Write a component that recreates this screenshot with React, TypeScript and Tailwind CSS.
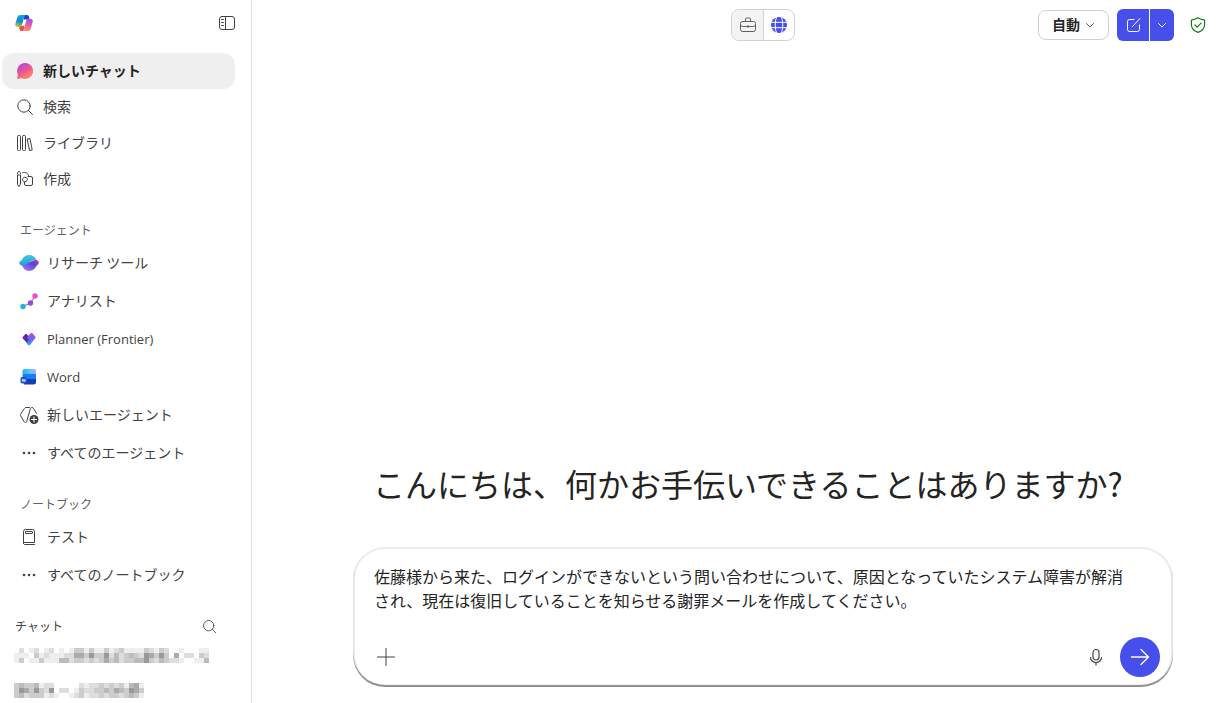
import React from "react";

type IconProps = { className?: string };

const line = {
  fill: "none",
  stroke: "currentColor",
  strokeLinecap: "round" as const,
  strokeLinejoin: "round" as const,
};

function CopilotLogo() {
  return (
    <svg viewBox="0 0 18 18" className="size-[18px]" aria-hidden="true">
      <defs>
        <linearGradient id="logo-left" x1="0.3" y1="0" x2="0" y2="1">
          <stop offset="0" stopColor="#0aa5e8" />
          <stop offset="0.45" stopColor="#1586cf" />
          <stop offset="0.75" stopColor="#6bbf6a" />
          <stop offset="1" stopColor="#f2c81c" />
        </linearGradient>
        <linearGradient id="logo-right" x1="0.6" y1="0" x2="0.3" y2="1">
          <stop offset="0" stopColor="#a050e8" />
          <stop offset="0.5" stopColor="#ee5c9c" />
          <stop offset="1" stopColor="#fb9a6a" />
        </linearGradient>
      </defs>
      <path d="M8.500 1H12c1 0 1.600.6 1.900 1.600L14.700 5.500H9z" fill="#1746c4" />
      <path d="M9.500 17H6.500c-1 0-1.500-.7-1.800-1.600L3.800 12.500 9 11.500z" fill="#f0503c" />
      <path d="M5.500 1H11c-1 .3-1.500 1.300-1.900 2.600L7 10.800c-.5 1.600-1.200 2.200-2.700 2.200H2.500C.6 13-.1 11.600.4 9.700L2.300 3.600C2.900 1.800 3.800 1 5.500 1z" fill="url(#logo-left)" />
      <path d="M12.500 17H7c1-.3 1.500-1.300 1.900-2.600L11 7.200C11.500 5.600 12.200 5 13.700 5h1.800c1.900 0 2.600 1.400 2.100 3.300l-1.900 6.100c-.6 1.800-1.500 2.600-3.200 2.600z" fill="url(#logo-right)" />
    </svg>
  );
}

function PanelIcon() {
  return (
    <svg viewBox="0 0 16 16" className="size-4" {...line} aria-hidden="true">
      <rect x="0.5" y="1.5" width="15" height="13" rx="2.5" />
      <path d="M6.500 1.500v13M2.500 4.500h2M2.500 7.500h2M2.500 10.500h2" />
    </svg>
  );
}

function ChatIcon() {
  return (
    <svg viewBox="0 0 18 18" className="size-[18px]" aria-hidden="true">
      <defs>
        <linearGradient id="chat-fill" x1="0.2" y1="0" x2="0.8" y2="1">
          <stop offset="0" stopColor="#a84be0" />
          <stop offset="0.5" stopColor="#ee5590" />
          <stop offset="1" stopColor="#fd9a5c" />
        </linearGradient>
      </defs>
      <path d="M9 1a8 8 0 1 1-3.800 15L1.600 17a.5.5 0 0 1-.6-.6l1-3.600A8 8 0 0 1 9 1z" fill="url(#chat-fill)" />
    </svg>
  );
}

function SearchIcon({ className = "size-[18px]" }: IconProps) {
  return (
    <svg viewBox="0 0 18 18" className={className} {...line} aria-hidden="true">
      <circle cx="8" cy="8" r="6.2" />
      <path d="m12.500 12.500 4 4" />
    </svg>
  );
}

function LibraryIcon() {
  return (
    <svg viewBox="0 0 18 18" className="size-[18px]" {...line} aria-hidden="true">
      <rect x="1.500" y="1.500" width="3" height="15" rx="1" />
      <rect x="6.500" y="1.500" width="3" height="15" rx="1" />
      <rect x="12.300" y="4.600" width="2.800" height="11.800" rx="1" transform="rotate(-12 13.700 10.500)" />
    </svg>
  );
}

function CreateIcon() {
  return (
    <svg viewBox="0 0 18 18" className="size-[18px]" {...line} aria-hidden="true">
      <path d="M1.500 3.500C1.500 2.400 2 1.500 3 1.500s1.500.9 1.500 2-.5 1.700-1.500 1.700-1.500-.6-1.500-1.700zM1.500 5.500v8.700L3 16.500l1.500-2.300V5.500" />
      <path d="M6.500 2.700c3.200-1.200 6 .6 6.300 3.800M10 11.500c-1.800 1-3.500 0-3.500-1.800 0-2 1.800-2.700 3.500-2.200 1.700.5 2 2.500 0 4" />
      <path d="M12 6.500h3a1.500 1.500 0 0 1 1.500 1.500v6a1.500 1.500 0 0 1-1.500 1.500h-5A1.500 1.500 0 0 1 8.500 14v-1.800" />
    </svg>
  );
}

function ResearchIcon() {
  return (
    <svg viewBox="0 0 20 20" className="size-5" aria-hidden="true">
      <defs>
        <linearGradient id="planet-top" x1="0" y1="0" x2="0.3" y2="1">
          <stop offset="0" stopColor="#3fd6d0" />
          <stop offset="1" stopColor="#2f94e8" />
        </linearGradient>
        <linearGradient id="planet-low" x1="1" y1="0" x2="0.2" y2="1">
          <stop offset="0" stopColor="#c23ad8" />
          <stop offset="0.4" stopColor="#5a45c8" />
          <stop offset="1" stopColor="#9a78ff" />
        </linearGradient>
      </defs>
      <path d="M3 12c1.200 3.800 3.700 6 7 6 3.600 0 6.300-2.200 7.200-5.200 1.700-.9 2.600-2.100 2.600-3.100 0-1.500-1.400-2.600-3.300-2.900z" fill="url(#planet-low)" />
      <path d="M2.800 7.200C4 4 6.500 2 10 2c3.500 0 6.200 2 7.200 5-3-.2-5.200.9-7.400 2.500C7.200 11.500 5 13 2.800 12.700 1.200 12.200.2 11.200.2 10.100c0-1.100 1-2.200 2.600-2.900z" fill="url(#planet-top)" />
    </svg>
  );
}

function AnalystIcon() {
  return (
    <svg viewBox="0 0 20 20" className="size-5" aria-hidden="true">
      <path d="M4 15.500 11.500 12 16 5" fill="none" stroke="#8a83a8" strokeWidth="1.200" />
      <circle cx="4" cy="15.500" r="2.700" fill="#1fb0dd" />
      <circle cx="11.500" cy="12" r="2.700" fill="#9a45dc" />
      <circle cx="16" cy="5" r="2.700" fill="#e850d4" />
    </svg>
  );
}

function PlannerIcon() {
  return (
    <svg viewBox="0 0 20 20" className="size-5" aria-hidden="true">
      <defs>
        <linearGradient id="planner-right" x1="0.6" y1="0" x2="0.4" y2="1">
          <stop offset="0" stopColor="#d23ccb" />
          <stop offset="0.4" stopColor="#7c5cf0" />
          <stop offset="1" stopColor="#27a4f0" />
        </linearGradient>
      </defs>
      <rect x="0.5" y="0.5" width="19" height="19" rx="4" fill="#fff" stroke="#f5f5f5" />
      <path d="M3.800 8 6 5.500c.6-.6 1.500-.6 2.100 0L11 8.500l1 5-2 2.800-6.200-6.800c-.5-.5-.5-1 0-1.500z" fill="#6324ac" />
      <path d="m8 8.500 3.600-4c.6-.6 1.400-.6 2 0L16.200 7.500c.5.6.5 1.200 0 1.800l-5.200 6.600c-.6.6-1.300.6-1.900 0L7.500 14 10 11z" fill="url(#planner-right)" />
    </svg>
  );
}

function WordIcon() {
  return (
    <svg viewBox="0 0 20 20" className="size-5" aria-hidden="true">
      <defs>
        <linearGradient id="word-page" x1="0" y1="0" x2="1" y2="0">
          <stop offset="0" stopColor="#20b4fa" />
          <stop offset="0.6" stopColor="#62c6ff" />
          <stop offset="1" stopColor="#a9a4ff" />
        </linearGradient>
      </defs>
      <path d="M5.500 2H15a2 2 0 0 1 2 2v4H3.500V4a2 2 0 0 1 2-2z" fill="url(#word-page)" />
      <path d="M5 7h12v5H3.500V8.500A1.500 1.500 0 0 1 5 7z" fill="#1b7cf2" />
      <path d="M5 12h12v3a2.500 2.500 0 0 1-2.500 2.500H5z" fill="#123fb8" />
      <rect x="1.500" y="10" width="6.500" height="6.500" rx="1.800" fill="#1b52c8" />
      <path d="m3.200 12 .7 2.600.9-2.200.9 2.200.7-2.600" fill="none" stroke="#fff" strokeWidth="0.8" />
    </svg>
  );
}

function NewAgentIcon() {
  return (
    <svg viewBox="0 0 20 20" className="size-5" aria-hidden="true">
      <path d="M10.500 2.500H6.800a1.500 1.500 0 0 0-1.300.8L1.500 9.400a1 1 0 0 0 0 1.200l3.700 6.200c.3.5.7.7 1.200.7.7 0 1.100-.4 1.300-1L11.300 4c.3-.9.8-1.500 1.700-1.500.7 0 1.200.3 1.500.9l3 5" {...line} />
      <circle cx="15" cy="14.500" r="4.500" fill="currentColor" />
      <path d="M15 12v5M12.500 14.500h5" stroke="#fff" strokeLinecap="round" />
    </svg>
  );
}

function DotsIcon() {
  return (
    <svg viewBox="0 0 20 20" className="size-5" fill="currentColor" aria-hidden="true">
      <circle cx="5" cy="10" r="1.300" />
      <circle cx="10" cy="10" r="1.300" />
      <circle cx="15" cy="10" r="1.300" />
    </svg>
  );
}

function NotebookIcon() {
  return (
    <svg viewBox="0 0 20 20" className="size-5" {...line} aria-hidden="true">
      <path d="M4.500 16V4.500a2 2 0 0 1 2-2h7a2 2 0 0 1 2 2v11h-11a1.500 1.500 0 0 0 1.500 2h9.500" />
      <rect x="6.500" y="4.500" width="7" height="2" rx="0.5" />
    </svg>
  );
}

function BriefcaseIcon() {
  return (
    <svg viewBox="0 0 18 18" className="size-[18px]" {...line} aria-hidden="true">
      <rect x="1.500" y="5.500" width="15" height="10" rx="2" />
      <path d="M6.500 5.500V3a1 1 0 0 1 1-1h3a1 1 0 0 1 1 1v2.500M1.500 8.500c0 1.200.8 2 2 2h11c1.200 0 2-.8 2-2M9 9.500v2" />
    </svg>
  );
}

function GlobeIcon() {
  return (
    <svg viewBox="0 0 18 18" className="size-[18px]" aria-hidden="true">
      <circle cx="9" cy="9" r="8" fill="#464feb" />
      <path d="M1 6.300h16M1 11.700h16M6.500 1C4.800 5.500 4.800 12.500 6.500 17M11.500 1c1.700 4.500 1.700 11.500 0 16" fill="none" stroke="#fff" />
    </svg>
  );
}

function ChevronIcon() {
  return (
    <svg viewBox="0 0 10 10" className="size-[10px]" {...line} aria-hidden="true">
      <path d="M1.500 3.500 5 7l3.500-3.500" />
    </svg>
  );
}

function ComposeIcon() {
  return (
    <svg viewBox="0 0 16 16" className="size-4" {...line} aria-hidden="true">
      <path d="M9 2.500H4.500a2 2 0 0 0-2 2v8a2 2 0 0 0 2 2h8a2 2 0 0 0 2-2V8M7.500 9.500l7.500-8" />
    </svg>
  );
}

function ShieldIcon() {
  return (
    <svg viewBox="0 0 16 16" className="size-4" {...line} strokeWidth="1.200" aria-hidden="true">
      <path d="M8 .7c1.700 1.200 3.600 2 6 2.200.4 0 .6.2.6.6v4c0 3.800-2.200 6.400-6.600 7.900-4.400-1.500-6.600-4.100-6.600-7.900v-4c0-.4.2-.6.6-.6C4.400 2.700 6.300 1.900 8 .7zM5 8l2.200 2.200L11 6.200" />
    </svg>
  );
}

function PlusIcon() {
  return (
    <svg viewBox="0 0 18 18" className="size-[18px]" {...line} aria-hidden="true">
      <path d="M9 .5v17M.5 9h17" />
    </svg>
  );
}

function MicIcon() {
  return (
    <svg viewBox="0 0 16 18" className="h-[18px] w-4" {...line} strokeWidth="1.200" aria-hidden="true">
      <rect x="5" y="1.500" width="6" height="10.500" rx="3" />
      <path d="M2.500 9.500a5.500 5 0 0 0 11 0M8 14.500v2.500" />
    </svg>
  );
}

function ArrowIcon() {
  return (
    <svg viewBox="0 0 20 20" className="size-5" {...line} strokeWidth="1.300" aria-hidden="true">
      <path d="M1.500 10h17M11 2.500l7.500 7.500-7.500 7.500" />
    </svg>
  );
}

// One hex digit per block, f = white
const hiddenChats = [
  {
    name: "chat-1",
    rows: [
      "fdfedfedfefecceceecedceeeecdecdffefffeef",
      "eeefcedeeeddaac9cc9dbdcbcd9ac9cfafddfcdf",
      "ecfeeceeebbdccdcdcacbdccbb9cdbcddeffeebf",
    ],
  },
  {
    name: "chat-2",
    rows: [
      "cbccbeddfffffdeddcdcdcebae",
      "c9ac9cd9fddfecddccbcabc9ac",
      "cbdcccedeffedceddcdccdcbce",
    ],
  },
];

function HiddenTitle({ rows }: { rows: string[] }) {
  const width = rows[0].length * 5;
  return (
    <svg viewBox={`0 0 ${width} 15`} className="h-[15px] self-start" shapeRendering="crispEdges" aria-hidden="true">
      {rows.map((row, y) =>
        row.split("").map((c, x) =>
          c === "f" ? null : <rect key={`${x}-${y}`} x={x * 5} y={y * 5} width="5" height="5" fill={`#${c}${c}${c}`} />
        )
      )}
    </svg>
  );
}

const navItems = [
  { label: "新しいチャット", icon: <ChatIcon />, active: true },
  { label: "検索", icon: <SearchIcon />, active: false },
  { label: "ライブラリ", icon: <LibraryIcon />, active: false },
  { label: "作成", icon: <CreateIcon />, active: false },
];

const sections = [
  {
    title: "エージェント",
    items: [
      { label: "リサーチ ツール", icon: <ResearchIcon /> },
      { label: "アナリスト", icon: <AnalystIcon /> },
      { label: "Planner (Frontier)", icon: <PlannerIcon />, latin: true },
      { label: "Word", icon: <WordIcon />, latin: true },
      { label: "新しいエージェント", icon: <NewAgentIcon /> },
      { label: "すべてのエージェント", icon: <DotsIcon /> },
    ],
  },
  {
    title: "ノートブック",
    items: [
      { label: "テスト", icon: <NotebookIcon /> },
      { label: "すべてのノートブック", icon: <DotsIcon /> },
    ],
  },
];

function Sidebar() {
  return (
    <aside className="flex w-[252px] shrink-0 flex-col overflow-hidden border-r border-[#e0e0e0] text-[#424242]">
      <div className="flex h-[46px] shrink-0 items-center justify-between pr-4 pl-[15px]">
        <a href="#" aria-label="Copilot">
          <CopilotLogo />
        </a>
        <button type="button" aria-label="サイドバー">
          <PanelIcon />
        </button>
      </div>
      <nav className="flex flex-col pt-[7px] pr-4 pb-px pl-[2px]">
        {navItems.map((item) => (
          <a
            key={item.label}
            href="#"
            className={
              item.active
                ? "flex h-9 items-center gap-[9px] rounded-xl bg-[#efefef] px-[14px] text-sm font-bold text-[#242424]"
                : "flex h-9 items-center gap-[9px] rounded-xl px-[14px] text-sm"
            }
          >
            {item.icon}
            <span className="pb-0.5">{item.label}</span>
          </a>
        ))}
      </nav>
      {sections.map((section) => (
        <section key={section.title} className="mt-[18px] pl-[19px]">
          <h2 className="pl-px text-xs leading-7 text-[#616161]">{section.title}</h2>
          <ul>
            {section.items.map((item) => (
              <li key={item.label}>
                <a href="#" className="flex h-[38px] items-center gap-2 text-sm">
                  {item.icon}
                  {item.latin ? (
                    <span className="font-['Open_Sans',sans-serif] text-[13px]">{item.label}</span>
                  ) : (
                    <span className="pb-0.5">{item.label}</span>
                  )}
                </a>
              </li>
            ))}
          </ul>
        </section>
      ))}
      <section className="mt-[18px] pr-[34px] pl-[14px]">
        <div className="flex items-center justify-between">
          <h2 className="pl-px text-xs leading-7">チャット</h2>
          <button type="button" aria-label="チャットを検索">
            <SearchIcon className="size-[15px]" />
          </button>
        </div>
        <div className="flex flex-col gap-5 pt-2">
          {hiddenChats.map((chat) => (
            <HiddenTitle key={chat.name} rows={chat.rows} />
          ))}
        </div>
      </section>
    </aside>
  );
}

function TopBar() {
  return (
    <header className="grid h-[50px] grid-cols-[1fr_auto_1fr] items-center px-[15px]">
      <div />
      <div className="flex h-8 overflow-hidden rounded-lg border border-[#d1d1d1]">
        <button type="button" aria-label="職場" className="flex w-8 items-center justify-center border-r border-[#d1d1d1] bg-[#f3f3f3] text-[#616161]">
          <BriefcaseIcon />
        </button>
        <button type="button" aria-label="Web" className="flex w-[30px] items-center justify-center">
          <GlobeIcon />
        </button>
      </div>
      <div className="flex items-center justify-end">
        <button type="button" className="mr-2 flex h-[30px] items-center gap-[5px] rounded-lg border border-[#d1d1d1] px-[13px] text-sm font-bold text-[#242424]">
          <span className="pb-0.5">自動</span>
          <span className="text-[#616161]">
            <ChevronIcon />
          </span>
        </button>
        <div className="mr-4 flex h-8 gap-px overflow-hidden rounded-md text-white">
          <button type="button" aria-label="新規作成" className="flex w-8 items-center justify-center bg-[#464feb]">
            <ComposeIcon />
          </button>
          <button type="button" aria-label="その他" className="flex w-6 items-center justify-center bg-[#464feb]">
            <ChevronIcon />
          </button>
        </div>
        <button type="button" aria-label="保護" className="text-[#107c10]">
          <ShieldIcon />
        </button>
      </div>
    </header>
  );
}

function Composer() {
  return (
    <form className="rounded-[32px] bg-white pt-[17px] pr-[13px] pb-[10px] pl-[21px] shadow-[inset_0_-2px_1px_#8c8c8c,inset_0_0_0_2px_#ebebeb]">
      <textarea
        aria-label="メッセージ"
        rows={3}
        className="mb-px block w-full resize-none overflow-hidden pr-7 text-base leading-6 text-[#242424] outline-none"
        defaultValue="佐藤様から来た、ログインができないという問い合わせについて、原因となっていたシステム障害が解消され、現在は復旧していることを知らせる謝罪メールを作成してください。"
      />
      <div className="flex items-center text-[#424242]">
        <button type="button" aria-label="追加" className="mr-auto ml-[3px]">
          <PlusIcon />
        </button>
        <button type="button" aria-label="音声入力" className="mr-4">
          <MicIcon />
        </button>
        <button type="submit" aria-label="送信" className="flex size-10 items-center justify-center rounded-full bg-[#464feb] text-white">
          <ArrowIcon />
        </button>
      </div>
    </form>
  );
}

export default function App() {
  return (
    <div className="flex h-screen bg-white font-['Noto_Sans_CJK_JP',sans-serif]" lang="ja">
      <Sidebar />
      <main className="flex min-w-0 flex-1 flex-col pl-[53px]">
        <TopBar />
        <div className="mx-auto mt-auto w-full max-w-[820px] pb-4">
          <h1 className="mb-[42px] pl-5 text-[32px] leading-[44px] text-[#242424]">
            こんにちは、何かお手伝いできることはありますか?
          </h1>
          <Composer />
        </div>
      </main>
    </div>
  );
}
